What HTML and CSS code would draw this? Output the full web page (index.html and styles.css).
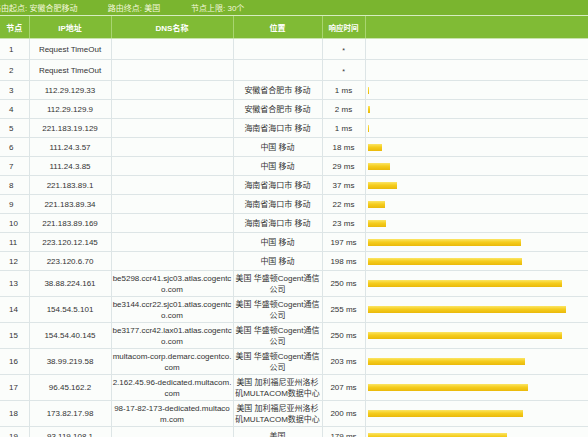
FILE: index.html
```html
<!DOCTYPE html>
<html lang="zh">
<head>
<meta charset="utf-8">
<link rel="stylesheet" href="styles.css">
</head>
<body>
<div class="topbar">
  <span class="info first">路由起点: 安徽合肥移动</span>
  <span class="info second">路由终点: 美国</span>
  <span class="info">节点上限: 30个</span>
</div>
<table class="trace">
  <colgroup>
    <col class="c-no"><col class="c-ip"><col class="c-dns"><col class="c-loc"><col class="c-time"><col class="c-bar">
  </colgroup>
  <thead>
    <tr><th>节点</th><th>IP地址</th><th>DNS名称</th><th>位置</th><th class="small">响应时间</th><th></th></tr>
  </thead>
  <tbody>
    <tr><td class="no">1</td><td>Request TimeOut</td><td></td><td></td><td class="star">*</td><td></td></tr>
    <tr><td class="no">2</td><td>Request TimeOut</td><td></td><td></td><td class="star">*</td><td></td></tr>
    <tr><td class="no">3</td><td>112.29.129.33</td><td></td><td>安徽省合肥市 移动</td><td>1 ms</td><td class="barcell"><div class="bar" style="width:1px"></div></td></tr>
    <tr><td class="no">4</td><td>112.29.129.9</td><td></td><td>安徽省合肥市 移动</td><td>2 ms</td><td class="barcell"><div class="bar" style="width:2px"></div></td></tr>
    <tr><td class="no">5</td><td>221.183.19.129</td><td></td><td>海南省海口市 移动</td><td>1 ms</td><td class="barcell"><div class="bar" style="width:1px"></div></td></tr>
    <tr><td class="no">6</td><td>111.24.3.57</td><td></td><td>中国 移动</td><td>18 ms</td><td class="barcell"><div class="bar" style="width:14px"></div></td></tr>
    <tr><td class="no">7</td><td>111.24.3.85</td><td></td><td>中国 移动</td><td>29 ms</td><td class="barcell"><div class="bar" style="width:22px"></div></td></tr>
    <tr><td class="no">8</td><td>221.183.89.1</td><td></td><td>海南省海口市 移动</td><td>37 ms</td><td class="barcell"><div class="bar" style="width:29px"></div></td></tr>
    <tr><td class="no">9</td><td>221.183.89.34</td><td></td><td>海南省海口市 移动</td><td>22 ms</td><td class="barcell"><div class="bar" style="width:17px"></div></td></tr>
    <tr><td class="no">10</td><td>221.183.89.169</td><td></td><td>海南省海口市 移动</td><td>23 ms</td><td class="barcell"><div class="bar" style="width:18px"></div></td></tr>
    <tr><td class="no">11</td><td>223.120.12.145</td><td></td><td>中国 移动</td><td>197 ms</td><td class="barcell"><div class="bar" style="width:153px"></div></td></tr>
    <tr><td class="no">12</td><td>223.120.6.70</td><td></td><td>中国 移动</td><td>198 ms</td><td class="barcell"><div class="bar" style="width:154px"></div></td></tr>
    <tr class="tall"><td class="no">13</td><td>38.88.224.161</td><td>be5298.ccr41.sjc03.atlas.cogentc<br>o.com</td><td>美国 华盛顿Cogent通信<br>公司</td><td>250 ms</td><td class="barcell"><div class="bar" style="width:194px"></div></td></tr>
    <tr class="tall"><td class="no">14</td><td>154.54.5.101</td><td>be3144.ccr22.sjc01.atlas.cogentc<br>o.com</td><td>美国 华盛顿Cogent通信<br>公司</td><td>255 ms</td><td class="barcell"><div class="bar" style="width:198px"></div></td></tr>
    <tr class="tall"><td class="no">15</td><td>154.54.40.145</td><td>be3177.ccr42.lax01.atlas.cogentc<br>o.com</td><td>美国 华盛顿Cogent通信<br>公司</td><td>250 ms</td><td class="barcell"><div class="bar" style="width:194px"></div></td></tr>
    <tr class="tall"><td class="no">16</td><td>38.99.219.58</td><td>multacom-corp.demarc.cogentco.<br>com</td><td>美国 华盛顿Cogent通信<br>公司</td><td>203 ms</td><td class="barcell"><div class="bar" style="width:157px"></div></td></tr>
    <tr class="tall"><td class="no">17</td><td>96.45.162.2</td><td>2.162.45.96-dedicated.multacom.<br>com</td><td>美国 加利福尼亚州洛杉<br>矶MULTACOM数据中心</td><td>207 ms</td><td class="barcell"><div class="bar" style="width:160px"></div></td></tr>
    <tr class="tall"><td class="no">18</td><td>173.82.17.98</td><td>98-17-82-173-dedicated.multaco<br>m.com</td><td>美国 加利福尼亚州洛杉<br>矶MULTACOM数据中心</td><td>200 ms</td><td class="barcell"><div class="bar" style="width:155px"></div></td></tr>
    <tr><td class="no">19</td><td>93.119.108.1</td><td></td><td>美国</td><td>179 ms</td><td class="barcell"><div class="bar" style="width:139px"></div></td></tr>
  </tbody>
</table>
</body>
</html>
```

FILE: styles.css
```css
html, body {
  margin: 0;
  padding: 0;
  background: #fbfdfb;
}
body {
  font-family: "Liberation Sans", "Noto Sans CJK SC", sans-serif;
  font-size: 8px;
  color: #333;
  width: 588px;
  overflow: hidden;
}
.topbar {
  height: 15px;
  background: #7ab52f;
  border-bottom: 1px solid #d6ecc0;
  display: flex;
  align-items: center;
  color: #f4f8dc;
  white-space: nowrap;
}
.info.first {
  margin-left: -7px;
  width: 114.7px;
}
.info.second {
  width: 83.3px;
}
.trace {
  border-collapse: collapse;
  table-layout: fixed;
  width: 588px;
}
.c-no { width: 29px; }
.c-ip { width: 82px; }
.c-dns { width: 122px; }
.c-loc { width: 89px; }
.c-time { width: 43px; }
.trace th {
  background: #80bb35;
  color: #fff;
  font-weight: bold;
  height: 22px;
  padding: 0;
  border-left: 1px solid #a9d571;
  border-bottom: 1px solid #c9e3ad;
  text-align: center;
}
.trace th:first-child { border-left: none; }
.trace th.small { font-size: 7.5px; }
.trace td {
  height: 18px;
  padding: 0 1px;
  border: 1px solid #dde5e6;
  text-align: center;
  line-height: 11px;
  white-space: nowrap;
  overflow: hidden;
}
.trace td:first-child { border-left: none; }
.trace td:last-child { border-right: none; }
.trace tr.tall td { height: 25px; }
.trace td.no {
  text-align: left;
  padding-left: 9px;
}
.trace td.star {
  font-size: 7px;
  padding-top: 2px;
}
.trace td.barcell {
  text-align: left;
  padding-left: 2px;
}
.bar {
  height: 7px;
  background: linear-gradient(#fbe565 0%, #f5cd1e 45%, #eab90a 100%);
  border-right: 0;
}
```
